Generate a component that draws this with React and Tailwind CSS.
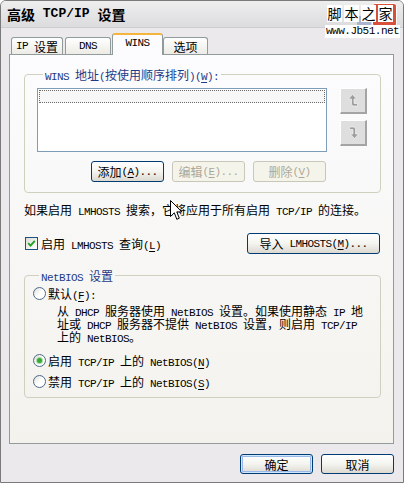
import React from "react";

const MONO = "font-['Liberation_Mono',monospace] text-[11px] leading-[10px] tracking-[-0.6px]";

// splits a label into CJK / latin runs; "&X" underlines X (access key)
const Label = ({ text, latin = MONO }) => {
  const runs = [];
  for (let i = 0; i < text.length; i++) {
    let ch = text[i];
    let u = false;
    if (ch === "&") {
      u = true;
      ch = text[++i];
    }
    const isLatin = ch.charCodeAt(0) < 128;
    const last = runs[runs.length - 1];
    if (last && last.latin === isLatin && !u && !last.u) last.s += ch;
    else runs.push({ s: ch, latin: isLatin, u });
  }
  return runs.map((r, i) => (
    <span key={i} className={`${r.latin ? latin : ""} ${r.u ? "underline underline-offset-[2px]" : ""}`}>
      {r.s}
    </span>
  ));
};

const Btn = ({ text, w = "w-[73px]", h = "h-[21px]", disabled, isDefault }) => (
  <div
    className={`${w} ${h} flex items-center justify-center rounded-[3px] border leading-[15px] ${
      disabled
        ? "border-[#c9c7ba] bg-[#f5f4ea] text-[#aca899]"
        : "border-[#003c74] bg-linear-to-b from-white via-[#f4f4f0] to-[#dcd9d0] text-black"
    } ${isDefault ? "shadow-[inset_0_0_0_1px_#cee7ff,inset_0_0_0_2px_#98b8ea]" : ""}`}
  >
    <Label text={text} />
  </div>
);

const Radio = ({ checked }) => (
  <div className="w-[13px] h-[13px] rounded-full border border-[#4e6a8a] bg-linear-to-br from-[#dcdcd6] via-white to-white flex items-center justify-center shrink-0">
    {checked && <div className="w-[5px] h-[5px] rounded-full bg-[#3aa93a] shadow-[0_0_1px_1px_#9fd99f]" />}
  </div>
);

const Checkbox = () => (
  <div className="w-[13px] h-[13px] border border-[#1c5180] bg-linear-to-br from-[#dcdcd7] to-white flex items-center justify-center shrink-0">
    <svg width="9" height="9" viewBox="0 0 9 9">
      <path d="M1.2 4.2 L3.5 6.6 L7.8 1.8" fill="none" stroke="#21a121" strokeWidth="1.8" />
    </svg>
  </div>
);

const ArrowBtn = ({ down }) => (
  <div className="w-[27px] h-[26px] bg-[#dedede] border-t border-l border-t-white border-l-white border-r-2 border-b-2 border-r-[#a4a4a4] border-b-[#a4a4a4] flex items-center justify-center">
    <svg width="11" height="13" viewBox="0 0 11 13" className={down ? "rotate-180" : ""}>
      <path d="M4.5 0.5 L0.5 5 L3.5 5 L3.5 10 Q3.5 12 5.5 12 L9.5 12 L9.5 9.5 L6 9.5 L6 5 L8.5 5 Z" fill="#9d9d9d" stroke="#f4f4f4" strokeWidth="0.7" />
    </svg>
  </div>
);

const Tab = ({ text, w, active }) =>
  active ? (
    <div
      className={`${w} h-[22px] -mb-px relative z-10 bg-[#fcfcfe] border-x border-[#919b9c] border-t-2 border-t-[#f5b43c] rounded-t-[3px] flex justify-center pt-[3px] leading-[15px]`}
    >
      <Label text={text} />
    </div>
  ) : (
    <div
      className={`${w} h-[17px] bg-linear-to-b from-white to-[#ecebe5] border-x border-t border-[#919b9c] rounded-t-[3px] flex items-center justify-center leading-[15px]`}
    >
      <Label text={text} />
    </div>
  );

export default function App() {
  return (
    <div className="relative w-[404px] h-[483px] overflow-hidden border border-[#7a7a7a] rounded-t-[6px] bg-[#ebe9eb] text-[12px] text-black whitespace-pre font-['Noto_Sans_CJK_SC',sans-serif]">
      {/* title bar */}
      <div className="h-[27px] flex items-center px-[6px] bg-linear-to-b from-[#efeeef] to-[#dcdbdd] border-b border-[#cfcdd0] font-bold text-[14px] leading-[17px]">
        <Label text="高级 TCP/IP 设置" latin="font-['Liberation_Mono',monospace] text-[13px] leading-[12px]" />
      </div>

      {/* watermark */}
      <div className="absolute top-[15px] right-[32px] w-[14px] h-[10px] bg-[#a9b4cf] rounded-[2px]" />
      <div className="absolute top-[2px] right-[6px] w-[25px] h-[24px] rounded-[3px] bg-[#d6503c] border border-white" />
      <div className="absolute top-[4px] left-[326px] flex gap-[2px]">
        {["脚", "本", "之", "家"].map((c) => (
          <span key={c} className="w-[15px] h-[17px] bg-white text-[14px] leading-[17px] text-center">
            {c}
          </span>
        ))}
      </div>
      <div className="absolute top-[24px] left-[324px] bg-white px-[1px] font-['Liberation_Mono',monospace] text-[11px] tracking-[-0.5px] leading-[13px]">
        www.Jb51.net
      </div>

      {/* client area */}
      <div className="pl-[8px] pr-[9px] pt-[5px]">
        <div className="h-[21px] flex items-end pl-[2px]">
          <Tab text="IP 设置" w="w-[52px] mr-[2px]" />
          <Tab text="DNS" w="w-[46px] mr-[1px]" />
          <Tab text="WINS" w="w-[51px]" active />
          <Tab text="选项" w="w-[45px]" />
        </div>

        <div className="h-[390px] border border-[#919b9c] bg-linear-to-b from-[#fcfcfe] to-[#f3f2ed] pl-[14px] pr-[12px] pt-[12px]">
          <fieldset className="border border-[#d0d0bf] rounded-[4px] px-[12px] pt-[6px] pb-[10px]">
            <legend className="ml-[6px] px-[2px] h-[15px] leading-[15px] text-[#1f3a86]">
              <Label text="WINS 地址(按使用顺序排列)(&W):" />
            </legend>
            <div className="flex items-start">
              <div className="w-[290px] h-[64px] border border-[#7f9db9] bg-white p-[1px]">
                <div className="h-[13px] border border-dotted border-[#6a6a6a] bg-[#f7f7f7]" />
              </div>
              <div className="ml-[13px] flex flex-col gap-[6px]">
                <ArrowBtn />
                <ArrowBtn down />
              </div>
            </div>
            <div className="w-[290px] mt-[9px] flex justify-end gap-[8px] pr-[1px]">
              <Btn text="添加(&A)..." />
              <Btn text="编辑(&E)..." disabled />
              <Btn text="删除(&V)" disabled />
            </div>
          </fieldset>

          <div className="mt-[9px] h-[15px] leading-[15px]">
            <Label text="如果启用 LMHOSTS 搜索，它将应用于所有启用 TCP/IP 的连接。" />
          </div>

          <div className="mt-[16px] h-[21px] flex items-center justify-between pl-[1px] pr-[1px]">
            <div className="flex items-center gap-[3px] leading-[15px]">
              <Checkbox />
              <span>
                <Label text="启用 LMHOSTS 查询(&L)" />
              </span>
            </div>
            <Btn text="导入 LMHOSTS(&M)..." w="w-[133px]" />
          </div>

          <fieldset className="mt-[14px] border border-[#d0d0bf] rounded-[4px] pl-[8px] pr-[8px] pt-[3px] pb-[8px]">
            <legend className="ml-[6px] px-[2px] h-[15px] leading-[15px] text-[#1f3a86]">
              <Label text="NetBIOS 设置" />
            </legend>
            <div className="h-[15px] flex items-center gap-[2px]">
              <Radio />
              <span className="leading-[15px]">
                <Label text="默认(&F):" />
              </span>
            </div>
            <div className="mt-[3px] pl-[24px] leading-[13px]">
              <div className="h-[13px]">
                <Label text="从 DHCP 服务器使用 NetBIOS 设置。如果使用静态 IP 地" />
              </div>
              <div className="h-[13px]">
                <Label text="址或 DHCP 服务器不提供 NetBIOS 设置，则启用 TCP/IP" />
              </div>
              <div className="h-[13px]">
                <Label text="上的 NetBIOS。" />
              </div>
            </div>
            <div className="mt-[10px] h-[15px] flex items-center gap-[2px]">
              <Radio checked />
              <span className="leading-[15px]">
                <Label text="启用 TCP/IP 上的 NetBIOS(&N)" />
              </span>
            </div>
            <div className="mt-[6px] h-[15px] flex items-center gap-[2px]">
              <Radio />
              <span className="leading-[15px]">
                <Label text="禁用 TCP/IP 上的 NetBIOS(&S)" />
              </span>
            </div>
          </fieldset>
        </div>

        <div className="mt-[10px] flex justify-end gap-[8px]">
          <Btn text="确定" h="h-[20px]" isDefault />
          <Btn text="取消" h="h-[20px]" />
        </div>
      </div>

      {/* mouse pointer */}
      <svg className="absolute left-[169px] top-[199px]" width="13" height="21" viewBox="0 0 13 21">
        <path d="M0.5 0.5 L0.5 16.5 L4.3 12.8 L6.8 19.3 L9.3 18.2 L6.8 11.9 L11.8 11.9 Z" fill="white" stroke="black" strokeWidth="1" />
      </svg>
    </div>
  );
}
